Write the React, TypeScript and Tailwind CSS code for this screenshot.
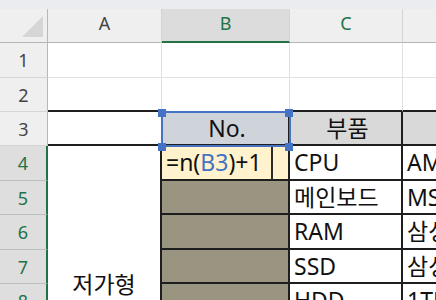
import React from "react";

const FONT = { fontFamily: '"Noto Sans", "Noto Sans CJK KR", sans-serif' };

const BLK = "border-[#1e1e1e]";

function RowHead({ n, sel }: { n: number; sel?: boolean }) {
  return sel ? (
    <div className="flex items-center justify-center bg-[#dedede] border-r-2 border-r-[#217346] border-b border-b-[#bdbdbd] text-[#217346] text-[18px] leading-none">
      {n}
    </div>
  ) : (
    <div className="flex items-center justify-center bg-[#efefef] border-r border-r-[#b7b7b7] border-b border-b-[#d5d5d5] text-[#444] text-[18px] leading-none">
      {n}
    </div>
  );
}

const plain = "bg-white border-r border-b border-[#e1e1e1]";
const boxed = `bg-white border-r-2 border-b-2 ${BLK}`;
const txt = "flex items-center pl-[4px] text-[23px] leading-[31px] text-[#111] whitespace-nowrap overflow-hidden";

export default function App() {
  const parts = ["CPU", "메인보드", "RAM", "SSD", "HDD", "", "", ""];
  const details = ["AMD 라이젠 5", "MSI B550", "삼성 DDR4", "삼성 SSD", "1TB HDD", "", "", ""];
  return (
    <div className="relative w-[436px] h-[300px] overflow-hidden bg-white" style={FONT}>
      <div className="h-[9px] bg-[#eaecef]" />
      <div className="grid grid-cols-[48px_114px_128px_113px_140px] grid-rows-[34px_35px_34px_34px_35px_34px_35px_34px_35px_34px_35px_34px]">
        {/* header row */}
        <div className="relative bg-[#efefef] border-r border-r-[#b7b7b7] border-b border-b-[#b5b5b5]">
          <svg className="absolute left-0 top-0" width="48" height="34">
            <polygon points="43,7 43,28 22,28" fill="#d6d6d6" />
          </svg>
        </div>
        <div className="flex items-center justify-center pb-[5px] bg-[#efefef] border-r border-r-[#d4d4d4] border-b border-b-[#b5b5b5] text-[#444] text-[18px] leading-none">A</div>
        <div className="flex items-center justify-center pb-[4px] bg-[#dcdcdc] border-r border-r-[#d4d4d4] border-b-2 border-b-[#217346] text-[#217346] text-[18px] leading-none">B</div>
        <div className="flex items-center justify-center pb-[5px] bg-[#efefef] border-r border-r-[#d4d4d4] border-b border-b-[#b5b5b5] text-[#217346] text-[18px] leading-none">C</div>
        <div className="flex items-center justify-center pb-[5px] bg-[#efefef] border-r border-r-[#d4d4d4] border-b border-b-[#b5b5b5] text-[#444] text-[18px] leading-none">D</div>

        {/* row 1 */}
        <RowHead n={1} />
        <div className={plain} />
        <div className={plain} />
        <div className={plain} />
        <div className={plain} />

        {/* row 2 */}
        <RowHead n={2} />
        <div className={`bg-white border-r border-r-[#e1e1e1] border-b-2 border-b-[#1e1e1e]`} />
        <div className={plain} />
        <div className={`bg-white border-r border-r-[#e1e1e1] border-b-2 border-b-[#1e1e1e]`} />
        <div className={`bg-white border-r border-r-[#e1e1e1] border-b-2 border-b-[#1e1e1e]`} />

        {/* row 3 */}
        <RowHead n={3} />
        <div className={`bg-white border-r border-r-[#e1e1e1] border-b-2 border-b-[#1e1e1e]`} />
        <div className={`bg-[#cfd3da] border-r-2 border-b-2 ${BLK} ${txt} justify-center pl-[0px]`}>No.</div>
        <div className={`bg-[#d9d9d9] border-r-2 border-b-2 ${BLK} ${txt} justify-center pl-[0px]`}>부품</div>
        <div className={`bg-[#d9d9d9] border-r-2 border-b-2 ${BLK}`} />

        {/* row 4 */}
        <RowHead n={4} sel />
        <div className={`row-span-8 bg-white border-r-2 border-r-[#1e1e1e] flex items-center justify-center text-[23px] leading-[31px] text-[#111]`}>
          저가형
        </div>
        <div className={`bg-[#fff2cc] border-r-2 border-b-2 ${BLK} ${txt}`}>
          <span>=n(</span>
          <span className="text-[#4472c4]">B3</span>
          <span>)+1</span>
        </div>
        <div className={`${boxed} ${txt}`}>{parts[0]}</div>
        <div className={`${boxed} ${txt}`}>{details[0]}</div>

        {[5, 6, 7, 8, 9, 10, 11].map((n, i) => (
          <React.Fragment key={n}>
            <RowHead n={n} sel />
            <div className={`bg-[#9a9580] border-r-2 border-b-2 ${BLK}`} />
            <div className={`${boxed} ${txt}`}>{parts[i + 1]}</div>
            <div className={`${boxed} ${txt}`}>{details[i + 1]}</div>
          </React.Fragment>
        ))}
      </div>

      {/* reference highlight on B3 */}
      <div className="absolute left-[161px] top-[111px] w-[130px] h-[36px] border-2 border-[#4472c4]" />
      <div className="absolute left-[158px] top-[109px] w-[8px] h-[8px] bg-[#4472c4]" />
      <div className="absolute left-[285px] top-[109px] w-[8px] h-[8px] bg-[#4472c4]" />
      <div className="absolute left-[158px] top-[143px] w-[8px] h-[8px] bg-[#4472c4]" />
      <div className="absolute left-[285px] top-[143px] w-[8px] h-[8px] bg-[#4472c4]" />
      {/* edit cursor */}
      <div className="absolute left-[271px] top-[147px] w-[2px] h-[33px] bg-[#2a2a2a]" />
    </div>
  );
}
